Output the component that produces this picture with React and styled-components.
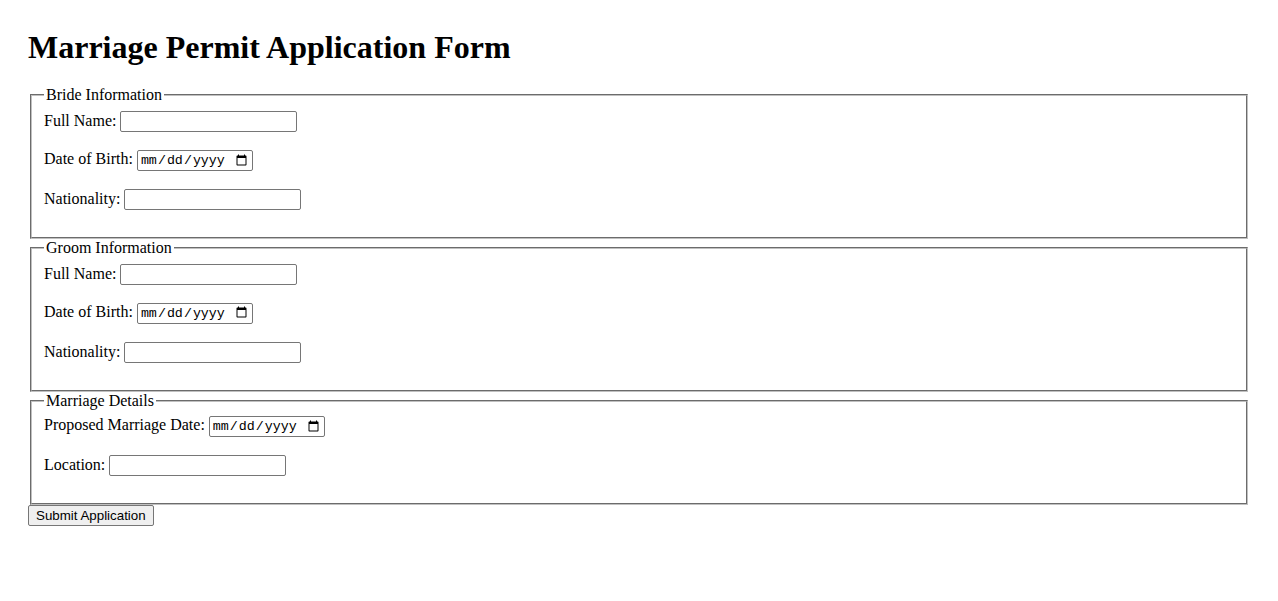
import React from 'react';
import styled, { createGlobalStyle } from 'styled-components';

const GlobalStyle = createGlobalStyle`
  body{
    margin:0;
    background:#fff;
  }
`;

const sections = [
  {
    title: 'Bride Information',
    fields: [
      { label: 'Full Name:', type: 'text' },
      { label: 'Date of Birth:', type: 'date' },
      { label: 'Nationality:', type: 'text' },
    ],
  },
  {
    title: 'Groom Information',
    fields: [
      { label: 'Full Name:', type: 'text' },
      { label: 'Date of Birth:', type: 'date' },
      { label: 'Nationality:', type: 'text' },
    ],
  },
  {
    title: 'Marriage Details',
    fields: [
      { label: 'Proposed Marriage Date:', type: 'date' },
      { label: 'Location:', type: 'text' },
    ],
  },
];

function App() {
  return (
    <Page>
      <GlobalStyle />
      <Title>Marriage Permit Application Form</Title>
      <form onSubmit={(e) => e.preventDefault()}>
        {sections.map((section, i) => (
          <Fieldset key={i}>
            <Legend>{section.title}</Legend>
            {section.fields.map((field, j) => (
              <Row key={j}>
                <Label>{field.label}</Label>
                {field.type === 'date' ? <DateInput type="date" /> : <TextInput type="text" />}
              </Row>
            ))}
          </Fieldset>
        ))}
        <SubmitButton type="submit">Submit Application</SubmitButton>
      </form>
    </Page>
  );
}

export default App;

const Page = styled.div`
  padding:29px 28px 28px;
  font-family:"Liberation Serif","Times New Roman",serif;
  font-size:16px;
  color:#000;
`;

const Title = styled.h1`
  font-size:32px;
  font-weight:bold;
  margin:0 0 20.44px;
`;

const Fieldset = styled.fieldset`
  margin:0 2px;
  padding:6.6px 12px 9px;
  border:2px groove rgb(192,192,192);
`;

const Legend = styled.legend`
  padding:0 2px;
`;

const Row = styled.div`
  display:flex;
  align-items:baseline;
  gap:4px;
  margin-bottom:18px;
`;

const Label = styled.label`
  white-space:nowrap;
`;

const TextInput = styled.input`
  font-family:"Liberation Sans",Arial,sans-serif;
  font-size:13.333px;
  width:177px;
  height:21px;
  box-sizing:border-box;
  padding:1px 2px;
  border:1px solid #767676;
  border-radius:2px;
`;

const DateInput = styled.input`
  font-family:"Liberation Mono","Courier New",monospace;
  font-size:13.333px;
  width:116px;
  height:21px;
  box-sizing:border-box;
  padding:1px 2px;
  border:1px solid #767676;
  border-radius:2px;
`;

const SubmitButton = styled.button`
  display:block;
  font-family:"Liberation Sans",Arial,sans-serif;
  font-size:13.333px;
  padding:1px 7px;
  height:21px;
  background:#efefef;
  border:1px solid #767676;
  border-radius:2px;
  color:#000;
`;
